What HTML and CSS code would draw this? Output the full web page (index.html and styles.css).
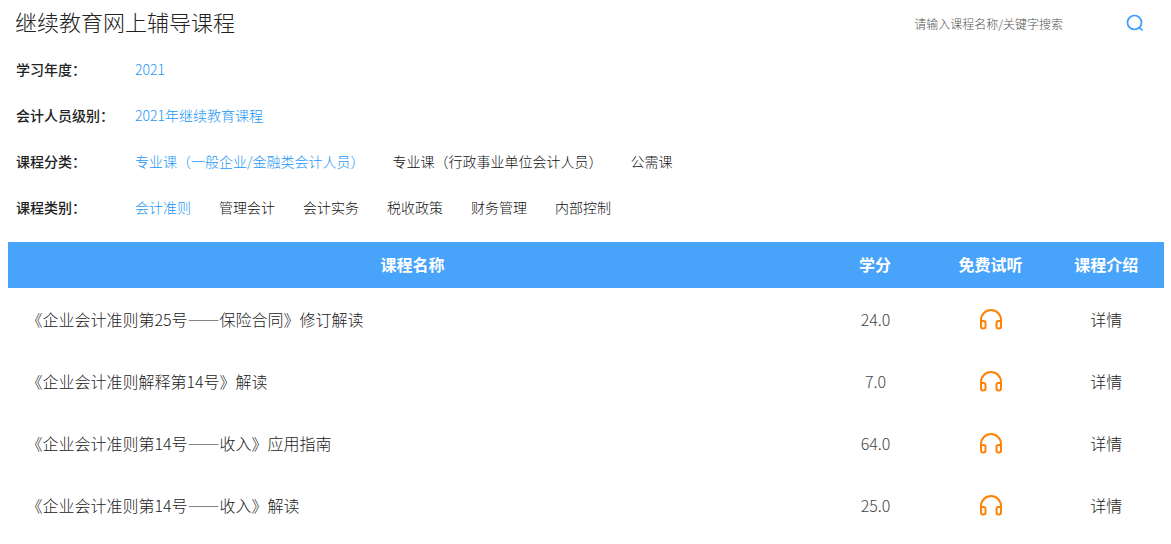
FILE: index.html
```html
<!DOCTYPE html>
<html lang="zh-CN">
<head>
<meta charset="utf-8">
<title>继续教育网上辅导课程</title>
<link rel="stylesheet" href="styles.css">
</head>
<body>
<header class="top">
  <h1 class="title">继续教育网上辅导课程</h1>
  <div class="search">
    <span class="search-text">请输入课程名称/关键字搜索</span>
    <svg class="search-icon" width="20" height="20" viewBox="0 0 20 20" fill="none" stroke="#3a9bff" stroke-width="1.7" stroke-linecap="round"><circle cx="9.5" cy="9.5" r="7"/><path d="M14.6 14.6 L17 17"/></svg>
  </div>
</header>
<section class="filters">
  <div class="filter"><span class="label">学习年度：</span><div class="opts"><a class="opt on">2021</a></div></div>
  <div class="filter"><span class="label">会计人员级别：</span><div class="opts"><a class="opt on">2021年继续教育课程</a></div></div>
  <div class="filter"><span class="label">课程分类：</span><div class="opts"><a class="opt on">专业课（一般企业/金融类会计人员）</a><a class="opt">专业课（行政事业单位会计人员）</a><a class="opt">公需课</a></div></div>
  <div class="filter"><span class="label">课程类别：</span><div class="opts"><a class="opt on">会计准则</a><a class="opt">管理会计</a><a class="opt">会计实务</a><a class="opt">税收政策</a><a class="opt">财务管理</a><a class="opt">内部控制</a></div></div>
</section>
<svg class="defs" width="0" height="0"><symbol id="hp" viewBox="0 0 24 22"><path d="M2 15 V12 a10 10 0 0 1 20 0 V15" fill="none" stroke="currentColor" stroke-width="2"/><path d="M2 13 h2.5 a2 2 0 0 1 2 2 v3.5 a2 2 0 0 1 -2 2 h-0.5 a2 2 0 0 1 -2 -2 z M22 13 h-2.5 a2 2 0 0 0 -2 2 v3.5 a2 2 0 0 0 2 2 h0.5 a2 2 0 0 0 2 -2 z" fill="none" stroke="currentColor" stroke-width="2"/></symbol></svg>
<table class="courses">
  <thead>
    <tr><th class="c-name">课程名称</th><th>学分</th><th>免费试听</th><th>课程介绍</th></tr>
  </thead>
  <tbody>
    <tr><td class="name">《企业会计准则第25号——保险合同》修订解读</td><td class="score">24.0</td><td><svg class="hp"><use href="#hp"/></svg></td><td>详情</td></tr>
    <tr><td class="name">《企业会计准则解释第14号》解读</td><td class="score">7.0</td><td><svg class="hp"><use href="#hp"/></svg></td><td>详情</td></tr>
    <tr><td class="name">《企业会计准则第14号——收入》应用指南</td><td class="score">64.0</td><td><svg class="hp"><use href="#hp"/></svg></td><td>详情</td></tr>
    <tr><td class="name">《企业会计准则第14号——收入》解读</td><td class="score">25.0</td><td><svg class="hp"><use href="#hp"/></svg></td><td>详情</td></tr>
  </tbody>
</table>
</body>
</html>
```
FILE: styles.css
```css
* { box-sizing: border-box; }
html, body { margin: 0; padding: 0; background: #fff; }
body {
  padding: 0 7px 0 8px;
  font-family: "Noto Sans CJK SC", "Open Sans", sans-serif;
  font-weight: 300;
  color: #222;
  overflow: hidden;
}
.top {
  display: flex;
  align-items: center;
  justify-content: space-between;
  height: 46px;
  padding: 0 19px 0 7px;
}
.title { margin: 0 0 3px; font-size: 22px; font-weight: 300; line-height: 43px; color: #222; }
.search { display: flex; align-items: flex-start; gap: 62px; }
.search-text { font-size: 12px; font-weight: 300; color: #555; line-height: 20px; padding-top: 2px; }
.search-icon { display: block; margin-top: 1px; }
.filters { padding-left: 8px; }
.filter { display: flex; align-items: center; height: 46px; font-size: 14px; line-height: 20px; }
.label { width: 119px; flex: none; font-size: 14px; font-weight: 500; color: #222; }
.opts { display: flex; gap: 28px; }
.opt { color: #111; white-space: nowrap; }
.opt.on { color: #1c96f5; }
.defs { position: absolute; }
.courses {
  width: 1156px;
  margin-top: 12px;
  border-collapse: collapse;
  table-layout: fixed;
}
.courses th {
  height: 46px;
  width: 10%;
  padding: 0 0 2px;
  background: #48a3fb;
  color: #fff;
  font-size: 16px;
  font-weight: 700;
}
.courses th.c-name { width: 70%; }
.courses td {
  height: 62px;
  padding: 0;
  text-align: center;
  font-size: 16px;
  font-weight: 300;
  color: #222;
}
.courses td.name { text-align: left; padding-left: 18.5px; }
.courses td.score { color: #444; padding-left: 1px; }
.hp { display: block; width: 24px; height: 22px; margin: 0 auto; color: #ff8205; }
```
